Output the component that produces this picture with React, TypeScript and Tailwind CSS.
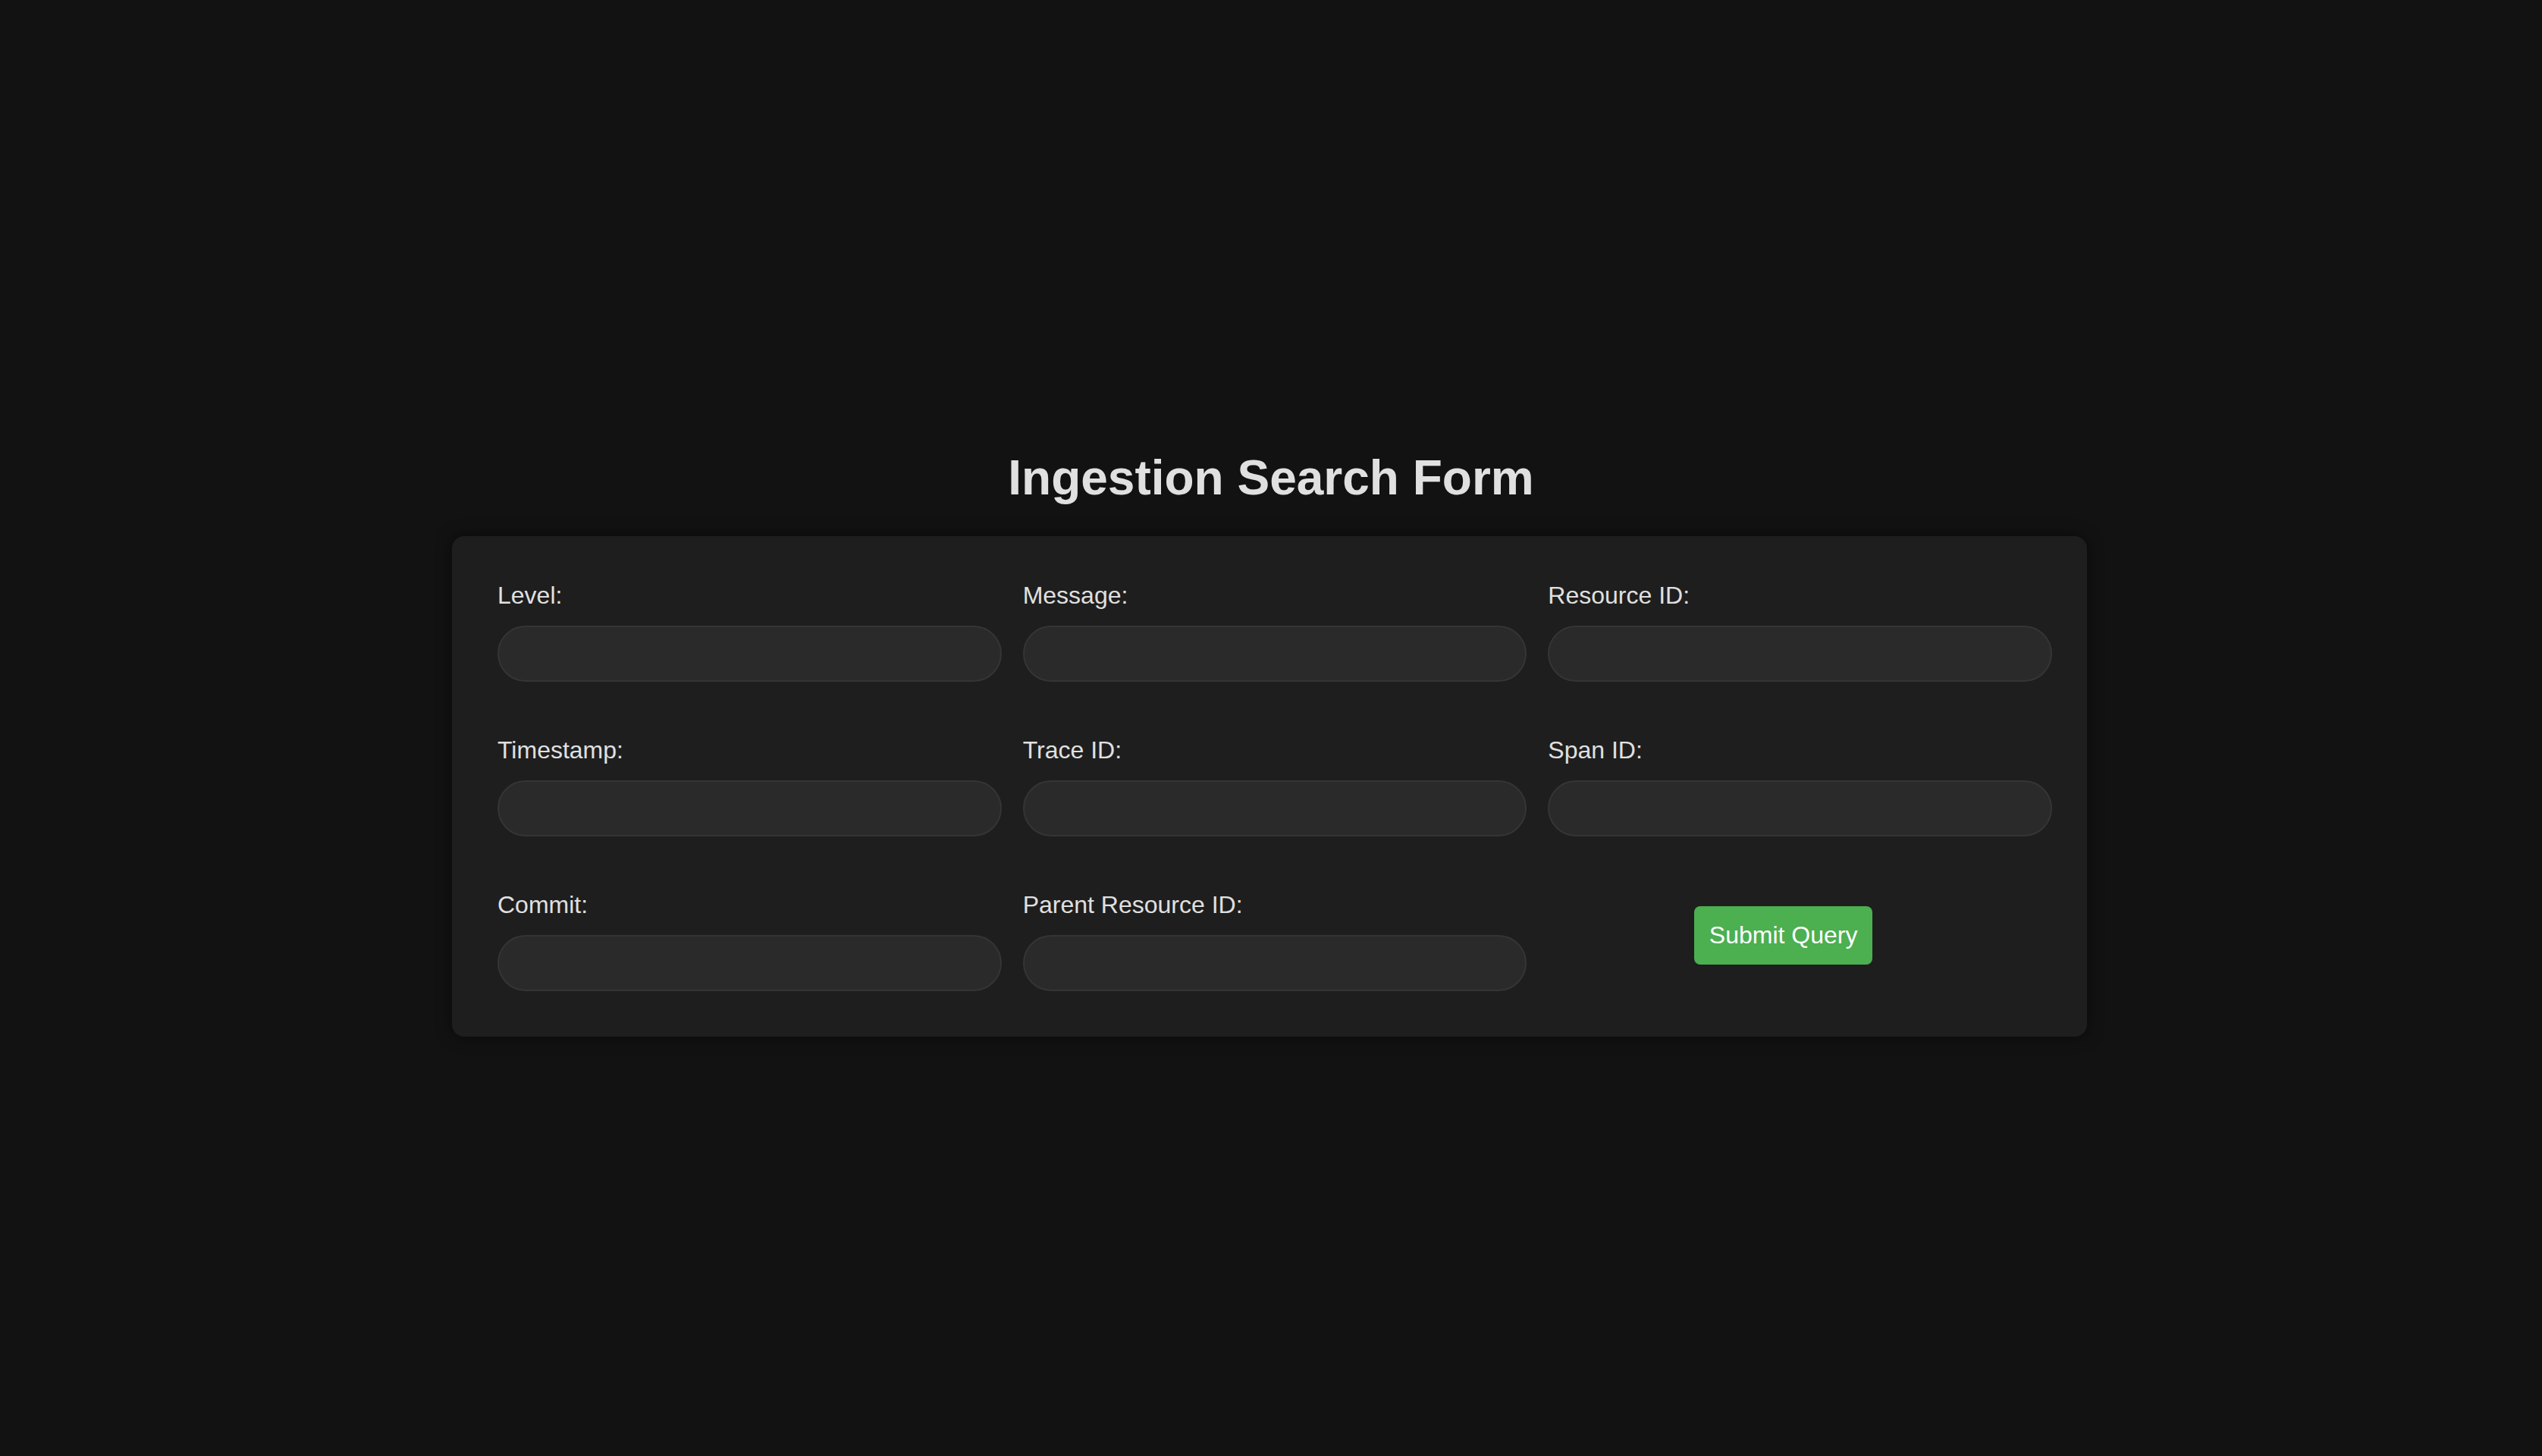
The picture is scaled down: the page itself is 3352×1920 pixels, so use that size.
import React from "react";

const fields: { label: string; name: string }[] = [
  { label: "Level:", name: "level" },
  { label: "Message:", name: "message" },
  { label: "Resource ID:", name: "resourceId" },
  { label: "Timestamp:", name: "timestamp" },
  { label: "Trace ID:", name: "traceId" },
  { label: "Span ID:", name: "spanId" },
  { label: "Commit:", name: "commit" },
  { label: "Parent Resource ID:", name: "parentResourceId" },
];

const Field: React.FC<{ label: string; name: string }> = ({ label, name }) => (
  <div className="flex flex-col">
    <label htmlFor={name} className="text-[32px] leading-[37px] mb-[21px] text-[#e0e0e0]">
      {label}
    </label>
    <input
      id={name}
      name={name}
      type="text"
      className="h-[74px] w-full rounded-full bg-[#2a2a2a] border-2 border-[#353535] px-[20px] text-[32px] text-[#e0e0e0] outline-none"
    />
  </div>
);

const App: React.FC = () => {
  const handleSubmit = (e: React.FormEvent) => {
    e.preventDefault();
  };

  return (
    <div
      className="min-h-screen bg-[#121212] flex flex-col items-center justify-center"
      style={{ fontFamily: '"Liberation Sans", Arial, sans-serif' }}
    >
      <h1 className="text-[64px] leading-[74px] font-bold text-[#e0e0e0] my-[40px]">
        Ingestion Search Form
      </h1>
      <form
        onSubmit={handleSubmit}
        className="w-[2156px] mr-[4px] bg-[#1e1e1e] rounded-[16px] pt-[60px] pb-[60px] pl-[60px] pr-[46px] shadow-[0_0_20px_rgba(0,0,0,0.5)] grid grid-cols-3 gap-x-[28px] gap-y-[72px]"
      >
        {fields.map((f) => (
          <Field key={f.name} label={f.label} name={f.name} />
        ))}
        <div className="flex justify-center items-start pt-[20px] pr-[44px]">
          <button
            type="submit"
            className="bg-[#4CAF50] text-white text-[32px] leading-[37px] px-[20px] py-[20px] rounded-[8px]"
          >
            Submit Query
          </button>
        </div>
      </form>
    </div>
  );
};

export default App;
